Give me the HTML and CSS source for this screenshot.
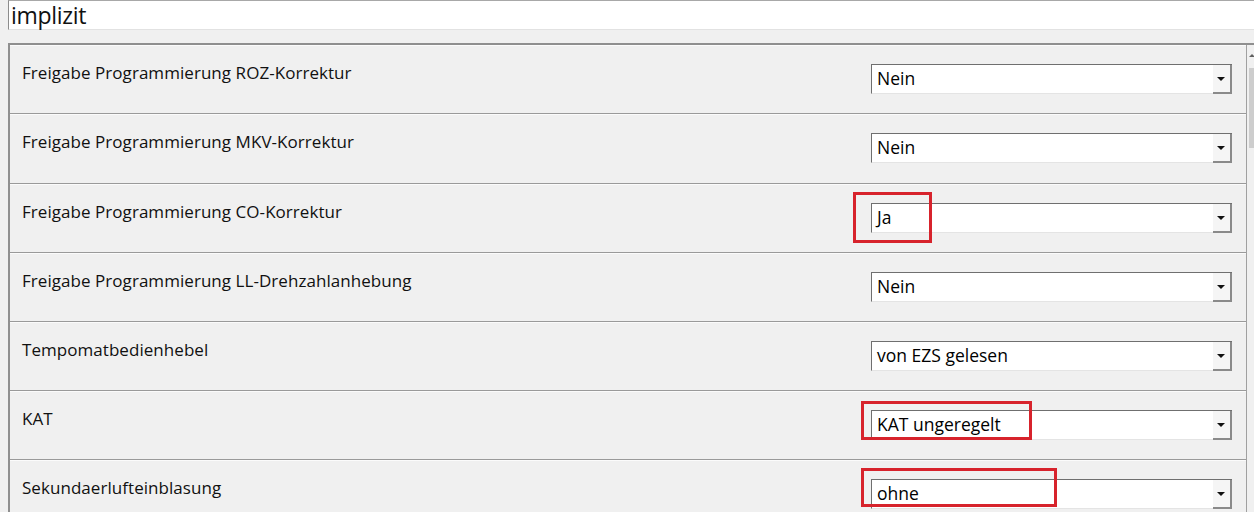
FILE: index.html
```html
<!DOCTYPE html>
<html lang="de">
<head>
<meta charset="utf-8">
<title>Codierung</title>
<link rel="stylesheet" href="styles.css">
</head>
<body>
<div class="topfield">implizit</div>
<div class="panel">
  <div class="rows">
    <div class="row">
      <div class="label">Freigabe Programmierung ROZ-Korrektur</div>
      <div class="combo"><span class="value">Nein</span><span class="btn"><span class="tri"></span></span></div>
    </div>
    <div class="row">
      <div class="label">Freigabe Programmierung MKV-Korrektur</div>
      <div class="combo"><span class="value">Nein</span><span class="btn"><span class="tri"></span></span></div>
    </div>
    <div class="row">
      <div class="label">Freigabe Programmierung CO-Korrektur</div>
      <div class="combo"><span class="value">Ja</span><span class="btn"><span class="tri"></span></span></div>
      <div class="mark mark-ja"></div>
    </div>
    <div class="row">
      <div class="label">Freigabe Programmierung LL-Drehzahlanhebung</div>
      <div class="combo"><span class="value">Nein</span><span class="btn"><span class="tri"></span></span></div>
    </div>
    <div class="row">
      <div class="label">Tempomatbedienhebel</div>
      <div class="combo"><span class="value">von EZS gelesen</span><span class="btn"><span class="tri"></span></span></div>
    </div>
    <div class="row">
      <div class="label">KAT</div>
      <div class="combo"><span class="value">KAT ungeregelt</span><span class="btn"><span class="tri"></span></span></div>
      <div class="mark mark-kat"></div>
    </div>
    <div class="row">
      <div class="label">Sekundaerlufteinblasung</div>
      <div class="combo"><span class="value">ohne</span><span class="btn"><span class="tri"></span></span></div>
      <div class="mark mark-ohne"></div>
    </div>
  </div>
  <div class="scrollbar">
    <div class="arrow"></div>
    <div class="thumb"></div>
  </div>
</div>
</body>
</html>
```
FILE: styles.css
```css
html, body {
  margin: 0;
  padding: 0;
  background: #f0f0f0;
  overflow: hidden;
  width: 1254px;
  height: 512px;
}
body {
  font-family: "Open Sans", "Noto Sans", "DejaVu Sans", sans-serif;
  color: #111;
}
.topfield {
  margin-left: 8px;
  width: 1260px;
  height: 30px;
  box-sizing: border-box;
  background: #fff;
  border-top: 1px solid #a8a8a8;
  border-left: 1px solid #8c8c8c;
  border-bottom: 1px solid #e2e2e2;
  font-size: 23px;
  line-height: 28px;
  padding-left: 2px;
  letter-spacing: -0.3px;
}
.panel {
  margin-top: 13px;
  margin-left: 8px;
  display: flex;
  width: 1270px;
  border-top: 2px solid #8f8f8f;
  border-left: 2px solid #8f8f8f;
}
.rows {
  width: 1236px;
  flex: none;
  border-right: 1px solid #a0a0a0;
}
.row {
  position: relative;
  display: flex;
  align-items: flex-start;
  height: 69px;
  box-sizing: border-box;
  border-bottom: 1px solid #9a9a9a;
  box-shadow: inset 0 1px 0 #fbfbfb;
}
.row:nth-child(2) {
  height: 70px;
}
.label {
  padding-left: 12px;
  padding-top: 17px;
  font-size: 17px;
  line-height: 22px;
  letter-spacing: 0.05px;
}
.combo {
  margin-left: auto;
  margin-right: 14px;
  margin-top: 19px;
  width: 361px;
  height: 30px;
  box-sizing: border-box;
  display: flex;
  background: #fff;
  border-top: 1px solid #6f6f6f;
  border-left: 1px solid #6f6f6f;
  border-bottom: 1px solid #e4e4e4;
}
.value {
  flex: 1;
  padding-left: 5px;
  font-size: 17.5px;
  line-height: 27px;
  color: #000;
}
.btn {
  width: 17px;
  flex: none;
  background: #f5f5f5;
  border-right: 2px solid #8a8a8a;
  border-bottom: 2px solid #8a8a8a;
  display: flex;
  align-items: center;
  justify-content: center;
  margin-bottom: -1px;
}
.tri {
  width: 0;
  height: 0;
  border-left: 4px solid transparent;
  border-right: 4px solid transparent;
  border-top: 4px solid #111;
  margin-left: -2px;
}
.mark {
  position: absolute;
  border: 3px solid #d7232c;
  box-sizing: border-box;
}
.mark-ja {
  left: 843px;
  top: 8px;
  width: 79px;
  height: 51px;
}
.mark-kat {
  left: 851px;
  top: 10px;
  width: 171px;
  height: 39px;
}
.mark-ohne {
  left: 851px;
  top: 8px;
  width: 196px;
  height: 39px;
}
.scrollbar {
  width: 17px;
  flex: none;
  background: #f0f0f0;
  position: relative;
}
.arrow {
  margin: 9px 0 0 2px;
  width: 0;
  height: 0;
  border-left: 3px solid transparent;
  border-right: 3px solid transparent;
  border-bottom: 3px solid #606060;
}
.thumb {
  margin: 11px 0 0 2px;
  width: 13px;
  height: 80px;
  background: #cdcdcd;
}
```
